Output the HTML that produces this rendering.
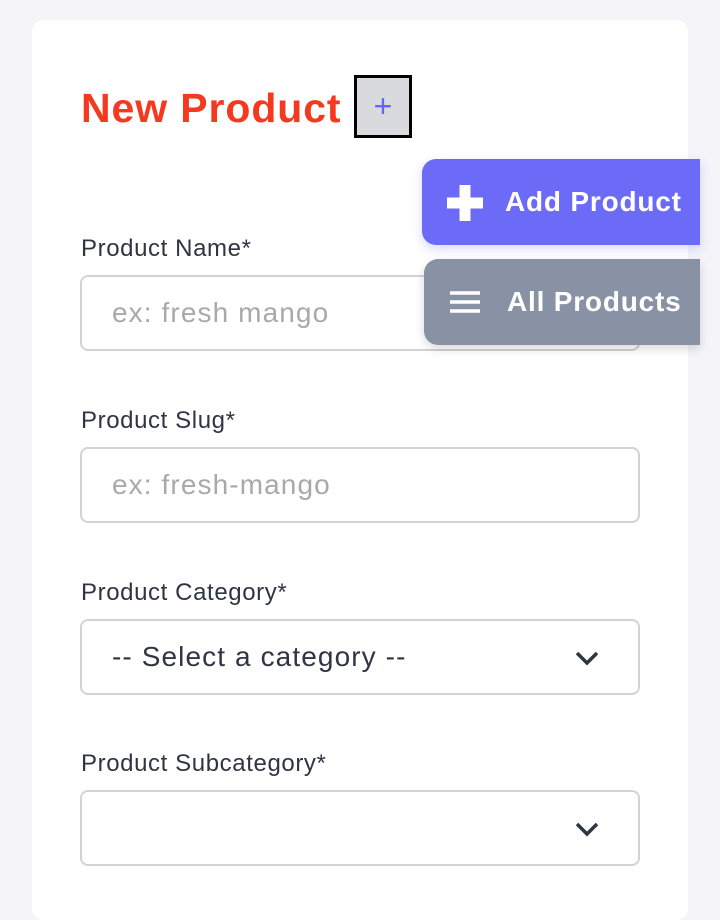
<!DOCTYPE html>
<html><head><style>
body{margin:0;width:720px;height:901px;background:#f4f4f9;font-family:"Liberation Sans",sans-serif;overflow:hidden;position:relative}
.card{position:absolute;left:32px;top:20px;width:656px;height:900px;background:#fff;border-radius:12px}
h1{position:absolute;left:81px;top:84px;margin:0;font-size:41px;font-weight:bold;color:#f4391f;letter-spacing:0.9px;line-height:48px}
.pb{position:absolute;left:354px;top:75px;width:58px;height:63px;border:3px solid #000;background:#d8dade;box-sizing:border-box;color:#6467f2;font-size:32px;text-align:center;line-height:56px}
label{position:absolute;left:81px;font-size:24px;color:#2f3542;letter-spacing:0.6px}
.in{position:absolute;left:80px;width:560px;height:76px;border:2px solid #d3d3d3;border-radius:8px;box-sizing:border-box;font-size:28px;color:#a9a9a9;padding-left:30px;line-height:72px;letter-spacing:1.1px}
.sel{color:#2f3542}
.chev{position:absolute;right:38px;top:28px}
.btn{position:absolute;left:422px;width:278px;height:86px;border-radius:14px 0 0 14px;color:#fff;font-weight:bold;font-size:28px;line-height:86px;box-sizing:border-box;padding-left:83px;letter-spacing:0.8px;box-shadow:0 4px 10px rgba(100,100,240,.25)}
</style></head><body>
<div class="card"></div>
<h1>New Product</h1>
<div class="pb">+</div>
<label style="top:235px">Product Name*</label>
<div class="in" style="top:275px">ex: fresh mango</div>
<label style="top:407px">Product Slug*</label>
<div class="in" style="top:447px">ex: fresh-mango</div>
<label style="top:579px">Product Category*</label>
<div class="in sel" style="top:619px">-- Select a category --<svg class="chev" width="26" height="18" viewBox="0 0 26 18"><path d="M3 4l10 10L23 4" stroke="#2f3542" stroke-width="3.5" fill="none"/></svg></div>
<label style="top:750px">Product Subcategory*</label>
<div class="in sel" style="top:790px"><svg class="chev" width="26" height="18" viewBox="0 0 26 18"><path d="M3 4l10 10L23 4" stroke="#2f3542" stroke-width="3.5" fill="none"/></svg></div>
<div class="btn" style="top:159px;background:#6b6bf8"><svg style="position:absolute;left:23px;top:24px" width="40" height="40" viewBox="0 0 40 40"><path d="M20 2v36M2 20h36" stroke="#fff" stroke-width="11"/></svg>Add Product</div>
<div class="btn" style="top:259px;left:424px;width:276px;background:#8892a4;box-shadow:0 4px 10px rgba(0,0,0,.15)"><svg style="position:absolute;left:26px;top:32px" width="30" height="22" viewBox="0 0 30 22"><path d="M0 2h30M0 11h30M0 20h30" stroke="#fff" stroke-width="3.5"/></svg>All Products</div>
</body></html>
